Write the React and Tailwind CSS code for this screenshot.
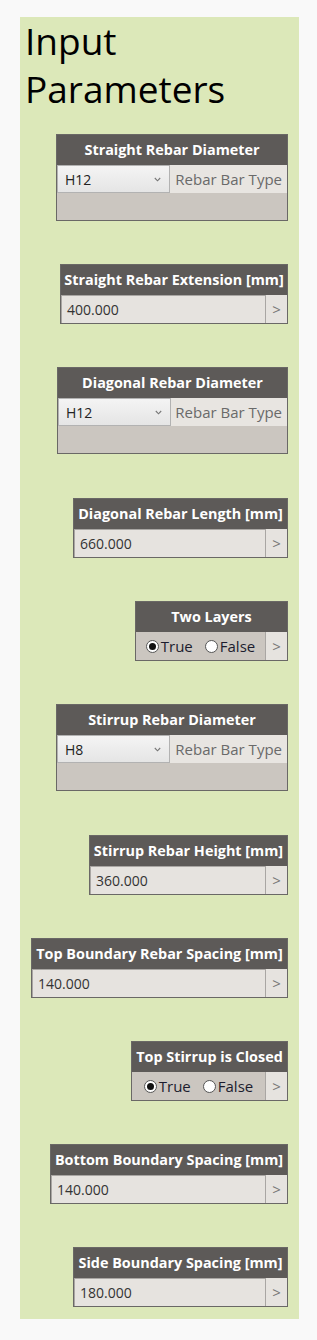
const FONT = { fontFamily: '"Open Sans", "Noto Sans", sans-serif' };

const NODES = [
  { kind: "select", title: "Straight Rebar Diameter", value: "H12", width: "w-[232px]", gap: "mt-0" },
  { kind: "number", title: "Straight Rebar Extension [mm]", value: "400.000", width: "w-[228px]", gap: "mt-[43px]" },
  { kind: "select", title: "Diagonal Rebar Diameter", value: "H12", width: "w-[231px]", gap: "mt-[43px]" },
  { kind: "number", title: "Diagonal Rebar Length [mm]", value: "660.000", width: "w-[215px]", gap: "mt-[44px]" },
  { kind: "bool", title: "Two Layers", width: "w-[153px]", gap: "mt-[43px]" },
  { kind: "select", title: "Stirrup Rebar Diameter", value: "H8", width: "w-[232px]", gap: "mt-[43px]" },
  { kind: "number", title: "Stirrup Rebar Height [mm]", value: "360.000", width: "w-[199px]", gap: "mt-[44px]" },
  { kind: "number", title: "Top Boundary Rebar Spacing [mm]", value: "140.000", width: "w-[257px]", gap: "mt-[43px]" },
  { kind: "bool", title: "Top Stirrup is Closed", width: "w-[157px]", gap: "mt-[43px]" },
  { kind: "number", title: "Bottom Boundary Spacing [mm]", value: "140.000", width: "w-[238px]", gap: "mt-[43px]" },
  { kind: "number", title: "Side Boundary Spacing [mm]", value: "180.000", width: "w-[215px]", gap: "mt-[43px]" },
];

function Header({ title }) {
  return (
    <div className="h-[30px] bg-[#5d5a58] flex items-center justify-center text-white text-[14.4px] font-bold whitespace-nowrap">
      {title}
    </div>
  );
}

function Chevron() {
  return (
    <svg width="7" height="5" viewBox="0 0 7 5" className="text-[#777]">
      <path d="M0.8 1 L3.5 3.8 L6.2 1" fill="none" stroke="currentColor" strokeWidth="1.1" />
    </svg>
  );
}

function Radio({ checked, label }) {
  return (
    <div className="flex items-center gap-[2px]">
      <span className="w-[13px] h-[13px] rounded-full bg-white border border-[#555] flex items-center justify-center">
        {checked && <span className="w-[7px] h-[7px] rounded-full bg-[#111]" />}
      </span>
      <span className="text-[15px] text-[#1c1c2e]">{label}</span>
    </div>
  );
}

function ArrowButton() {
  return (
    <div className="w-[22px] flex items-center justify-center bg-[#e6e3df] border-l border-[#a9a6a3] text-[#777] text-[15px]">
      &gt;
    </div>
  );
}

function Node({ kind, title, value, width, gap }) {
  return (
    <div className={`${width} ${gap} border border-[#6a6866] bg-[#cbc6c0]`}>
      <Header title={title} />
      {kind === "select" && (
        <>
          <div className="h-[28px] flex">
            <div className="w-[113px] flex items-center justify-between pl-[7px] pr-[8px] bg-gradient-to-b from-[#f4f4f4] to-[#e5e5e5] border border-[#b2b2b2] text-[14px] text-[#222]">
              <span>{value}</span>
              <Chevron />
            </div>
            <div className="flex-1 flex items-center justify-end pr-[5px] bg-[#e8e5e1] text-[15px] text-[#6a6a6a] whitespace-nowrap">
              Rebar Bar Type
            </div>
          </div>
          <div className="h-[27px]" />
        </>
      )}
      {kind === "number" && (
        <div className="h-[28px] flex">
          <div className="flex-1 flex items-center pl-[5px] bg-[#e6e3df] border-t border-l border-[#a9a6a3] text-[14px] text-[#333]">
            {value}
          </div>
          <ArrowButton />
        </div>
      )}
      {kind === "bool" && (
        <div className="h-[28px] flex">
          <div className="flex-1 flex items-center justify-center gap-[12px] pt-[1px]">
            <Radio checked label="True" />
            <Radio label="False" />
          </div>
          <ArrowButton />
        </div>
      )}
    </div>
  );
}

export default function App() {
  return (
    <div className="min-h-screen bg-[#f9f9f9] pt-[19px] pb-[20px]" style={FONT}>
      <div className="ml-[20px] w-[279px] bg-[#dce8b9] pr-[11px] pb-[12px]">
        <h1 className="-mt-[2px] pl-[5px] text-[37px] leading-[48px] text-black font-normal">
          Input
          <br />
          Parameters
        </h1>
        <div className="mt-[21px] flex flex-col items-end">
          {NODES.map((n) => (
            <Node key={n.title} {...n} />
          ))}
        </div>
      </div>
    </div>
  );
}
